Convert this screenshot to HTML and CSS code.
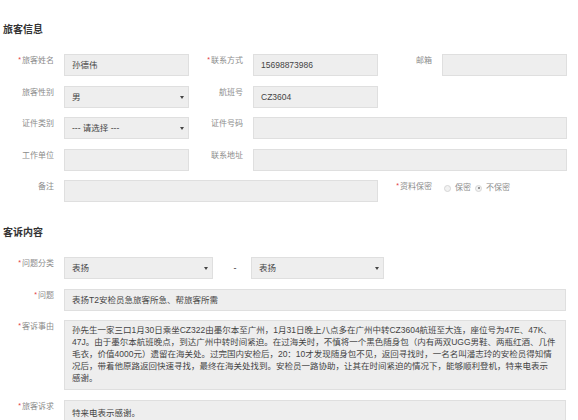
FILE: index.html
```html
<!DOCTYPE html>
<html lang="zh-CN">
<head>
<meta charset="utf-8">
<title>旅客信息</title>
<link rel="stylesheet" href="styles.css">
</head>
<body>
<div class="page">
  <h2 class="title">旅客信息</h2>
  <div class="grid">
    <div class="field"><label class="label"><span class="req">*</span>旅客姓名</label><div class="input">孙德伟</div></div>
    <div class="field"><label class="label"><span class="req">*</span>联系方式</label><div class="input">15698873986</div></div>
    <div class="field"><label class="label">邮箱</label><div class="input"></div></div>

    <div class="field"><label class="label">旅客性别</label><div class="input select">男</div></div>
    <div class="field"><label class="label">航班号</label><div class="input">CZ3604</div></div>
    <div class="field"></div>

    <div class="field"><label class="label">证件类别</label><div class="input select">--- 请选择 ---</div></div>
    <div class="field span2"><label class="label">证件号码</label><div class="input"></div></div>

    <div class="field"><label class="label">工作单位</label><div class="input"></div></div>
    <div class="field span2"><label class="label">联系地址</label><div class="input"></div></div>

    <div class="field span2"><label class="label">备注</label><div class="input"></div></div>
    <div class="field"><label class="label"><span class="req">*</span>资料保密</label>
      <div class="radios">
        <span class="radio"></span><span class="radio-text">保密</span>
        <span class="radio checked"></span><span class="radio-text">不保密</span>
      </div>
    </div>
  </div>

  <h2 class="title title-2">客诉内容</h2>
  <div class="rows">
    <div class="field"><label class="label"><span class="req">*</span>问题分类</label>
      <div class="input select sel1">表扬</div>
      <span class="dash">-</span>
      <div class="input select sel2">表扬</div>
    </div>
    <div class="field"><label class="label"><span class="req">*</span>问题</label><div class="input">表扬T2安检员急旅客所急、帮旅客所需</div></div>
    <div class="field"><label class="label"><span class="req">*</span>客诉事由</label>
      <div class="input area">孙先生一家三口1月30日乘坐CZ322由墨尔本至广州，1月31日晚上八点多在广州中转CZ3604航班至大连，座位号为47E、47K、<br>47J。由于墨尔本航班晚点，到达广州中转时间紧迫。在过海关时，不慎将一个黑色随身包（内有两双UGG男鞋、两瓶红酒、几件<br>毛衣，价值4000元）遗留在海关处。过完国内安检后，20：10才发现随身包不见，返回寻找时，一名名叫潘志玲的安检员得知情<br>况后，带着他原路返回快速寻找，最终在海关处找到。安检员一路协助，让其在时间紧迫的情况下，能够顺利登机，特来电表示<br>感谢。</div>
    </div>
    <div class="field"><label class="label"><span class="req">*</span>旅客诉求</label><div class="input tall">特来电表示感谢。</div></div>
  </div>
</div>
</body>
</html>
```

FILE: styles.css
```css
html, body {
  margin: 0;
  padding: 0;
  background: #ffffff;
}

body {
  font-family: "Liberation Sans", Arial, "Noto Sans CJK SC", sans-serif;
  color: #444444;
  overflow: hidden;
}

.page {
  padding-top: 24px;
}

.title {
  margin: 0 0 18px 3px;
  font-size: 10px;
  line-height: 12px;
  font-weight: bold;
  color: #333333;
}

.title-2 {
  margin-top: 25px;
}

.grid {
  display: grid;
  grid-template-columns: repeat(3, 189px);
  grid-auto-rows: 22px;
  row-gap: 9.5px;
}

.field {
  display: flex;
  align-items: flex-start;
}

.span2 {
  grid-column: span 2;
}

.label {
  flex: none;
  width: 54px;
  margin-right: 10px;
  padding-top: 2px;
  text-align: right;
  font-size: 8px;
  line-height: 10px;
  color: #8c8c8c;
  white-space: nowrap;
}

.req {
  color: #e4393c;
  font-size: 7px;
  position: relative;
  top: -1px;
  margin-right: 1px;
}

.input {
  flex: 1;
  height: 22px;
  box-sizing: border-box;
  border: 1px solid #dfdfdf;
  background: #eeeeee;
  padding: 1px 7px 0;
  font-size: 8.5px;
  line-height: 19px;
  color: #444444;
  white-space: nowrap;
  position: relative;
}

.select::after {
  content: "";
  position: absolute;
  right: 4px;
  top: 9px;
  border-left: 2px solid transparent;
  border-right: 2px solid transparent;
  border-top: 3px solid #444444;
}

.radios {
  display: flex;
  align-items: center;
  padding-top: 3px;
  font-size: 8px;
  line-height: 10px;
  color: #8c8c8c;
}

.radio {
  width: 7px;
  height: 7px;
  box-sizing: border-box;
  border: 1px solid #d6d6d6;
  border-radius: 50%;
  background: #f2f2f2;
  margin: 0 4px 0 2px;
  position: relative;
}

.radio.checked::after {
  content: "";
  position: absolute;
  left: 1.5px;
  top: 1.5px;
  width: 2px;
  height: 2px;
  border-radius: 50%;
  background: #777777;
}

.radio-text {
  margin-right: 2px;
}

.rows {
  width: 566px;
  display: flex;
  flex-direction: column;
  gap: 9.5px;
}

.sel1 {
  flex: none;
  width: 149px;
}

.sel2 {
  flex: none;
  width: 133px;
}

.dash {
  flex: none;
  width: 38px;
  box-sizing: border-box;
  padding-left: 6px;
  text-align: center;
  font-size: 9px;
  line-height: 22px;
  color: #333333;
}

.area {
  height: 70px;
  padding: 3px 7px;
  line-height: 12px;
}

.tall {
  height: 26px;
  line-height: 22px;
}
```
